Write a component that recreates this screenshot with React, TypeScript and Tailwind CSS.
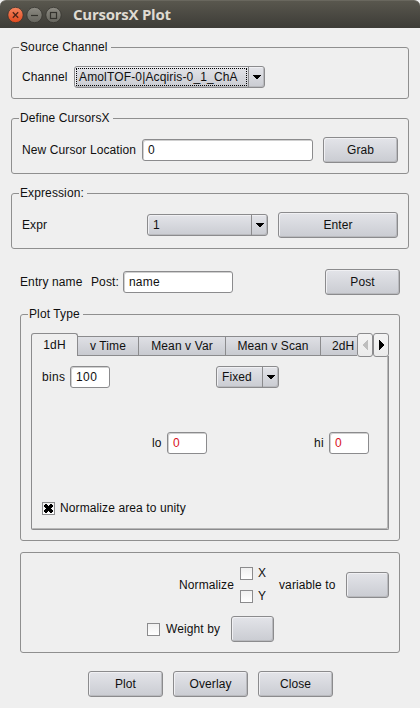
import React from 'react';

const RAISED =
  'rounded-[3px] border border-[#8b8b8d] bg-gradient-to-b from-[#e3e4e9] to-[#caccd2] shadow-[inset_1px_1px_0_#f0f0f3,inset_-1px_-1px_0_#b9babe]';

function Group({ title, className, children }: { title: string; className: string; children: React.ReactNode }) {
  return (
    <fieldset className={`min-w-0 rounded-[3px] border border-[#8f8f8f] ${className}`}>
      <legend className="ml-[7px] h-[15px] pr-[3px] pl-[1px] leading-[14px] whitespace-nowrap">{title}</legend>
      {children}
    </fieldset>
  );
}

function Button({ className, children }: { className: string; children?: React.ReactNode }) {
  return (
    <button className={`flex h-[26px] shrink-0 items-center justify-center ${RAISED} ${className}`}>{children}</button>
  );
}

function Field({ className, value }: { className: string; value: string }) {
  return (
    <div
      className={`flex h-[22px] shrink-0 items-center rounded-[3px] border border-[#8b8b8d] bg-white pl-[5px] shadow-[inset_1px_1px_0_#d0d0d0] ${className}`}
    >
      {value}
    </div>
  );
}

function Combo({ className, value, focused, arrow }: { className: string; value: string; focused?: boolean; arrow: string }) {
  return (
    <div className={`flex h-[22px] shrink-0 ${RAISED} ${className}`}>
      <div className="flex min-w-0 grow p-px">
        <span
          className={`flex grow items-center whitespace-nowrap ${focused ? 'border border-dotted border-black pl-[2px] tracking-[0.15px]' : 'pl-[4px]'}`}
        >
          {value}
        </span>
      </div>
      <div className={`flex shrink-0 items-center justify-center border-l border-[#8b8b8d] ${arrow}`}>
        <svg width="8" height="4" viewBox="0 0 8 4" shapeRendering="crispEdges">
          <path d="M0 0H8V1H7V2H6V3H5V4H3V3H2V2H1V1H0Z" fill="#000" />
        </svg>
      </div>
    </div>
  );
}

function Check({ checked }: { checked?: boolean }) {
  return (
    <span className="flex size-[13px] shrink-0 items-center justify-center border border-[#8b8b8d] bg-gradient-to-b from-[#f0f0f0] to-white">
      {checked && (
        <svg width="9" height="9" viewBox="0 0 9 9" shapeRendering="crispEdges">
          <path
            d="M1 0H3V1H4V2H5V1H6V0H8V1H9V3H8V4H7V5H8V6H9V8H8V9H6V8H5V7H4V8H3V9H1V8H0V6H1V5H2V4H1V3H0V1H1Z"
            fill="#000"
          />
        </svg>
      )}
    </span>
  );
}

function TitleBar() {
  return (
    <header className="flex h-[28px] items-center rounded-t-[6px] border-t border-[#69675e] bg-gradient-to-b from-[#59574e] to-[#3d3c37] pl-[7px]">
      <svg width="56" height="18" viewBox="0 0 56 18">
        <defs>
          <linearGradient id="close" x1="0" y1="0" x2="0" y2="1">
            <stop offset="0" stopColor="#f58660" />
            <stop offset="1" stopColor="#e0481d" />
          </linearGradient>
          <linearGradient id="grey" x1="0" y1="0" x2="0" y2="1">
            <stop offset="0" stopColor="#8d8b83" />
            <stop offset="1" stopColor="#66655e" />
          </linearGradient>
        </defs>
        <circle cx="8.5" cy="9" r="7.7" fill="url(#close)" stroke="#35332e" strokeWidth="0.8" />
        <circle cx="27.5" cy="9" r="7.7" fill="url(#grey)" stroke="#35332e" strokeWidth="0.8" />
        <circle cx="46.5" cy="9" r="7.7" fill="url(#grey)" stroke="#35332e" strokeWidth="0.8" />
        <path d="M5.8 6.3L11.2 11.7M11.2 6.3L5.8 11.7" stroke="#4b2418" strokeWidth="1.3" />
        <path d="M24 9.5H31" stroke="#33322d" strokeWidth="1.2" />
        <rect x="43.5" y="6.5" width="6" height="6" fill="none" stroke="#33322d" strokeWidth="1.2" />
      </svg>
      <h1 className="-mt-[1px] ml-[10px] font-['Open_Sans','Noto_Sans',sans-serif] text-[15px] leading-[20px] font-bold tracking-[-0.25px] whitespace-nowrap text-[#dfdbd2]">
        CursorsX Plot
      </h1>
    </header>
  );
}

function Tab({ className, children }: { className: string; children: React.ReactNode }) {
  return (
    <div
      className={`flex h-[20px] shrink-0 items-center justify-center border-y border-r border-[#8b8b8d] bg-gradient-to-b from-[#dfe0e5] to-[#c8cad0] whitespace-nowrap ${className}`}
    >
      {children}
    </div>
  );
}

function TabScroll({ className, children }: { className: string; children: React.ReactNode }) {
  return (
    <div
      className={`flex h-[24px] shrink-0 items-center justify-center rounded-[3px] border border-[#8b8b8d] bg-gradient-to-b from-[#f4f4f4] to-[#ebebeb] ${className}`}
    >
      <svg width="5" height="10" viewBox="0 0 5 10" shapeRendering="crispEdges">
        {children}
      </svg>
    </div>
  );
}

function PlotTabs() {
  return (
    <div className="flex h-[197px] w-[358px] flex-col">
      <div className="flex h-[23px] items-end">
        <div className="z-10 flex h-[23px] w-[47px] shrink-0 items-center justify-center rounded-t-[3px] border border-b-0 border-[#8b8b8d] bg-[#efefef]">
          1dH
        </div>
        <Tab className="w-[61px]">v Time</Tab>
        <Tab className="w-[87px]">Mean v Var</Tab>
        <Tab className="w-[95px]">Mean v Scan</Tab>
        <div className="flex h-[20px] w-[36px] shrink-0 items-center border-y border-[#8b8b8d] bg-gradient-to-b from-[#dfe0e5] to-[#c8cad0] pl-[11px]">
          2dH
        </div>
        <TabScroll className="z-10 -mb-px w-[16px]">
          <path d="M5 0V10H4V9H3V8H2V7H1V6H0V4H1V3H2V2H3V1H4V0Z" fill="#bebebe" />
        </TabScroll>
        <TabScroll className="z-10 -mb-px w-[16px]">
          <path d="M0 0V10H1V9H2V8H3V7H4V6H5V4H4V3H3V2H2V1H1V0Z" fill="#000" />
        </TabScroll>
      </div>
      <div className="h-[174px] rounded-b-[2px] border border-t-0 border-[#8b8b8d] pl-[10px] shadow-[inset_-1px_-1px_0_#b8b8b8]">
        <div className="flex items-center pt-[10px]">
          <span className="w-[28px] tracking-[0.3px]">bins</span>
          <Field className="w-[40px] tracking-[0.4px]" value="100" />
          <Combo className="ml-[106px] w-[63px]" value="Fixed" arrow="w-[16px]" />
        </div>
        <div className="flex items-center pt-[44px] pl-[110px]">
          <span className="w-[15px]">lo</span>
          <Field className="w-[40px] text-[#d8101a]" value="0" />
          <span className="ml-[107px] w-[15px] tracking-[0.3px]">hi</span>
          <Field className="w-[40px] text-[#d8101a]" value="0" />
        </div>
        <div className="mt-[48px] flex h-[13px] items-center">
          <Check checked />
          <span className="mb-[2px] ml-[5px]">Normalize area to unity</span>
        </div>
      </div>
    </div>
  );
}

export default function App() {
  return (
    <div className="h-[708px] w-[420px] overflow-hidden bg-[#efefef] font-['Liberation_Sans',Arial,sans-serif] text-[12px] leading-[14px] tracking-[0.11px] text-[#101010]">
      <TitleBar />
      <main className="flex flex-col pt-[12px]">
        <Group title="Source Channel" className="ml-[11px] h-[59px] w-[398px]">
          <div className="flex items-center pt-[11px] pl-[10px]">
            <span className="w-[52px]">Channel</span>
            <Combo className="w-[191px]" value="AmolTOF-0|Acqiris-0_1_ChA" focused arrow="w-[16px]" />
          </div>
        </Group>
        <Group title="Define CursorsX" className="mt-[12px] ml-[11px] h-[63px] w-[398px]">
          <div className="flex items-center pt-[11px] pl-[10px]">
            <span className="w-[120px] whitespace-nowrap">New Cursor Location</span>
            <Field className="w-[171px]" value="0" />
            <Button className="ml-[10px] w-[75px]">Grab</Button>
          </div>
        </Group>
        <Group title="Expression:" className="mt-[12px] ml-[11px] h-[63px] w-[398px]">
          <div className="flex items-center pt-[11px] pl-[10px]">
            <span className="w-[125px]">Expr</span>
            <Combo className="w-[121px]" value="1" arrow="w-[16px]" />
            <Button className="ml-[10px] w-[120px]">Enter</Button>
          </div>
        </Group>
        <div className="mt-[20px] flex items-center pl-[20px]">
          <span className="w-[71px]">Entry name</span>
          <span className="w-[32px]">Post:</span>
          <Field className="w-[110px] tracking-[0.2px]" value="name" />
          <Button className="ml-[92px] w-[75px]">Post</Button>
        </div>
        <Group title="Plot Type" className="mt-[12px] ml-[20px] h-[234px] w-[380px]">
          <div className="pt-[11px] pl-[10px]">
            <PlotTabs />
          </div>
        </Group>
        <section className="mt-[11px] ml-[20px] h-[101px] w-[380px] rounded-[3px] border border-[#8f8f8f]">
          <div className="flex items-center pt-[14px] pl-[158px]">
            <span className="w-[61px]">Normalize</span>
            <div className="flex w-[39px] flex-col gap-[10px]">
              <div className="flex h-[13px] items-center">
                <Check />
                <span className="mb-[2px] ml-[5px]">X</span>
              </div>
              <div className="flex h-[13px] items-center">
                <Check />
                <span className="mb-[2px] ml-[5px]">Y</span>
              </div>
            </div>
            <span className="w-[67px]">variable to</span>
            <Button className="w-[43px]" />
          </div>
          <div className="mt-[13px] flex items-center pl-[126px]">
            <Check />
            <span className="ml-[6px] w-[65px]">Weight by</span>
            <Button className="w-[43px]" />
          </div>
        </section>
        <footer className="mt-[18px] flex gap-[10px] pl-[88px]">
          <Button className="w-[75px]">Plot</Button>
          <Button className="w-[75px]">Overlay</Button>
          <Button className="w-[75px]">Close</Button>
        </footer>
      </main>
    </div>
  );
}
